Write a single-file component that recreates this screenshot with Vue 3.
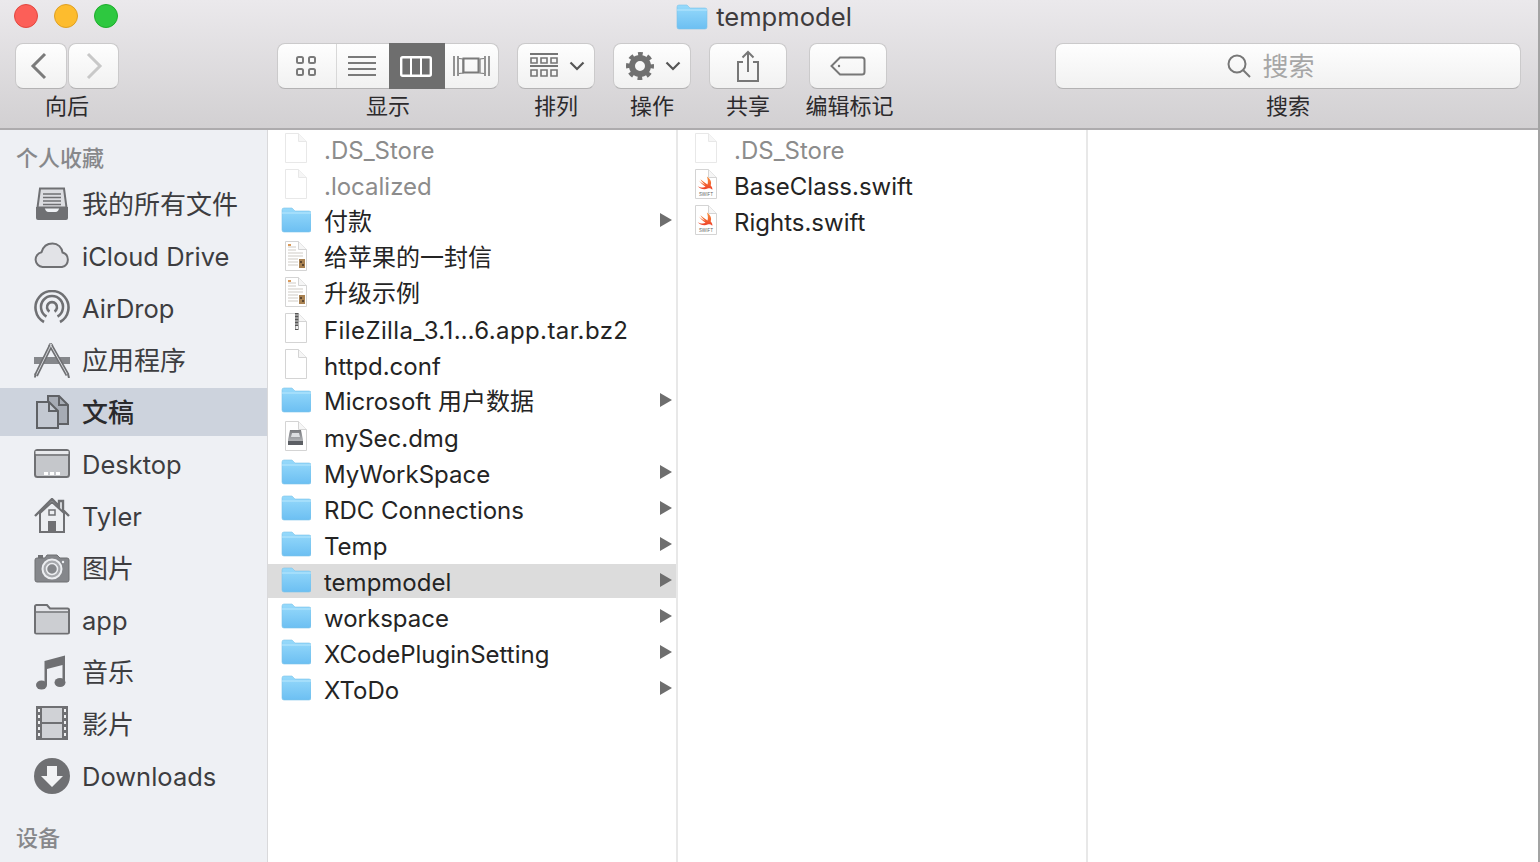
<script setup>
const favorites = [
  { name: '我的所有文件', icon: 'all', cjk: true },
  { name: 'iCloud Drive', icon: 'cloud' },
  { name: 'AirDrop', icon: 'airdrop' },
  { name: '应用程序', icon: 'apps', cjk: true },
  { name: '文稿', icon: 'docs', cjk: true, active: true },
  { name: 'Desktop', icon: 'desktop' },
  { name: 'Tyler', icon: 'home' },
  { name: '图片', icon: 'camera', cjk: true },
  { name: 'app', icon: 'folder' },
  { name: '音乐', icon: 'music', cjk: true },
  { name: '影片', icon: 'film', cjk: true },
  { name: 'Downloads', icon: 'download' }
]

const columns = [
  [
    { name: '.DS_Store', kind: 'blank', hidden: true },
    { name: '.localized', kind: 'blank', hidden: true },
    { name: '付款', kind: 'folder', cjk: true },
    { name: '给苹果的一封信', kind: 'paper', cjk: true },
    { name: '升级示例', kind: 'paper', cjk: true },
    { name: 'FileZilla_3.1…6.app.tar.bz2', kind: 'zip', spaced: true },
    { name: 'httpd.conf', kind: 'blank' },
    { name: 'Microsoft 用户数据', kind: 'folder', cjk: true },
    { name: 'mySec.dmg', kind: 'dmg' },
    { name: 'MyWorkSpace', kind: 'folder' },
    { name: 'RDC Connections', kind: 'folder' },
    { name: 'Temp', kind: 'folder' },
    { name: 'tempmodel', kind: 'folder', active: true },
    { name: 'workspace', kind: 'folder' },
    { name: 'XCodePluginSetting', kind: 'folder' },
    { name: 'XToDo', kind: 'folder' }
  ],
  [
    { name: '.DS_Store', kind: 'blank', hidden: true },
    { name: 'BaseClass.swift', kind: 'swift' },
    { name: 'Rights.swift', kind: 'swift' }
  ]
]
</script>

<template>
  <div class="finder">
    <header class="toolbar">
      <div class="lights">
        <span class="light red"></span>
        <span class="light yellow"></span>
        <span class="light green"></span>
      </div>
      <div class="title">
        <svg width="32" height="26" viewBox="0 0 32 26">
          <defs>
            <linearGradient id="folderFill" x1="0" y1="0" x2="0" y2="1">
              <stop offset="0" stop-color="#97dafb" />
              <stop offset="1" stop-color="#6cbff2" />
            </linearGradient>
            <linearGradient id="swiftFill" x1="0" y1="0" x2="0" y2="1">
              <stop offset="0" stop-color="#f8913a" />
              <stop offset="1" stop-color="#ee3f2a" />
            </linearGradient>
            <linearGradient id="driveFill" x1="0" y1="0" x2="0" y2="1">
              <stop offset="0" stop-color="#77797d" />
              <stop offset="1" stop-color="#c4c6c9" />
            </linearGradient>
          </defs>
          <path d="M1 3a2 2 0 0 1 2-2h8l3 3h15a2 2 0 0 1 2 2v17a2 2 0 0 1-2 2H3a2 2 0 0 1-2-2z" fill="url(#folderFill)" stroke="#7cc3ea" stroke-width=".6" />
          <path d="M1 6h30" stroke="#b9e7fd" stroke-width="1" />
        </svg>
        <span>tempmodel</span>
      </div>
      <div class="tools">
        <div class="group nav-group">
          <div class="buttons">
            <button class="btn nav-btn back">
              <svg width="20" height="30" viewBox="0 0 20 30"><path d="M16 3 4 15l12 12" fill="none" stroke="#7b7b7b" stroke-width="3" /></svg>
            </button>
            <button class="btn nav-btn forward">
              <svg width="20" height="30" viewBox="0 0 20 30"><path d="M4 3l12 12L4 27" fill="none" stroke="#c8c8c8" stroke-width="3" /></svg>
            </button>
          </div>
          <span class="label">向后</span>
        </div>

        <div class="group view-group">
          <div class="segments">
            <button class="seg seg-icons">
              <svg width="22" height="22" viewBox="0 0 22 22" fill="none" stroke="#7a7a7a" stroke-width="2">
                <rect x="2" y="2" width="6" height="6" rx="1.5" /><rect x="14" y="2" width="6" height="6" rx="1.5" />
                <rect x="2" y="14" width="6" height="6" rx="1.5" /><rect x="14" y="14" width="6" height="6" rx="1.5" />
              </svg>
            </button>
            <button class="seg seg-list">
              <svg width="28" height="20" viewBox="0 0 28 20" stroke="#7a7a7a" stroke-width="2"><path d="M0 1h28M0 7h28M0 13h28M0 19h28" /></svg>
            </button>
            <button class="seg seg-columns on">
              <svg width="32" height="21" viewBox="0 0 32 21" fill="none" stroke="#fff" stroke-width="2.4">
                <rect x="1.2" y="1.2" width="29.6" height="18.6" rx="1.5" /><path d="M11 1v19M21 1v19" stroke-width="2" />
              </svg>
            </button>
            <button class="seg seg-flow">
              <svg width="37" height="22" viewBox="0 0 37 22" fill="none" stroke="#7a7a7a" stroke-width="2">
                <rect x="10.5" y="3.5" width="15" height="14" /><path d="M1 1v20M5 1v20M32 1v20M36 1v20" stroke-width="1.6" /><path d="M6 3.500l4 .5v14l-4 .5M31 3.500l-4 .5v14l4 .5" stroke-width="1.2" />
              </svg>
            </button>
          </div>
          <span class="label">显示</span>
        </div>

        <div class="group">
          <button class="btn tool-btn menu-btn">
            <svg width="28" height="26" viewBox="0 0 28 26" fill="none" stroke="#757575">
              <path d="M0 1h28M0 13h28" stroke-width="1.8" />
              <path d="M1 5h6v5H1zM11 5h6v5h-6zM21 5h6v5h-6zM1 17h6v6H1zM11 17h6v6h-6zM21 17h6v6h-6z" stroke-width="1.6" />
            </svg>
            <svg class="chev" width="16" height="10" viewBox="0 0 16 10"><path d="M1.500 1.500 8 8l6.500-6.500" fill="none" stroke="#555" stroke-width="2.2" /></svg>
          </button>
          <span class="label">排列</span>
        </div>

        <div class="group">
          <button class="btn tool-btn menu-btn">
            <svg width="28" height="28" viewBox="0 0 28 28" fill="none" stroke="#707070">
              <circle cx="14" cy="14" r="8" stroke-width="6" />
              <circle cx="14" cy="14" r="11.5" stroke-width="5" stroke-dasharray="4.5 4.531" stroke-dashoffset="2.25" />
            </svg>
            <svg class="chev" width="16" height="10" viewBox="0 0 16 10"><path d="M1.500 1.500 8 8l6.500-6.500" fill="none" stroke="#555" stroke-width="2.2" /></svg>
          </button>
          <span class="label">操作</span>
        </div>

        <div class="group">
          <button class="btn tool-btn">
            <svg width="24" height="32" viewBox="0 0 24 32" fill="none" stroke="#777" stroke-width="2">
              <path d="M7 12H2v19h20V12h-5M12 22V2M6.500 7.500 12 2l5.500 5.500" />
            </svg>
          </button>
          <span class="label">共享</span>
        </div>

        <div class="group tag-group">
          <button class="btn tool-btn tag-btn">
            <svg width="36" height="20" viewBox="0 0 36 20" fill="none" stroke="#777" stroke-width="2">
              <path d="M10 1.500h22a2.500 2.500 0 0 1 2.500 2.500v12a2.500 2.500 0 0 1-2.500 2.500H10L1.500 10z" /><circle cx="9" cy="10" r="1.2" fill="#777" stroke="none" />
            </svg>
          </button>
          <span class="label">编辑标记</span>
        </div>

        <div class="group search-group">
          <div class="btn search">
            <svg width="24" height="24" viewBox="0 0 24 24" fill="none" stroke="#777" stroke-width="2">
              <circle cx="10" cy="10" r="8.5" /><path d="M16 16l7 7" />
            </svg>
            <span>搜索</span>
          </div>
          <span class="label">搜索</span>
        </div>
      </div>
    </header>

    <main class="body">
      <aside class="sidebar">
        <h4 class="side-title">个人收藏</h4>
        <ul class="side-list">
          <li v-for="item in favorites" :key="item.name" class="side-item" :class="{ active: item.active, cjk: item.cjk }">
            <svg class="side-icon" width="36" height="36" viewBox="0 0 36 36">
              <g v-if="item.icon === 'all'">
                <path d="M6 2.500h24l2.500 19h-29z" fill="#dcdde1" stroke="#6f7073" stroke-width="2" />
                <path d="M9 8h18M9 11.500h18M9 15h18M9 18.500h18" stroke="#6f7073" stroke-width="1.5" />
                <path d="M2 21h8.500c.5 3 2 5 4 5h7c2 0 3.500-2 4-5H34v11a2 2 0 0 1-2 2H4a2 2 0 0 1-2-2z" fill="#6f7073" />
              </g>
              <path v-else-if="item.icon === 'cloud'" d="M8.500 29a7.500 7.500 0 0 1-1-14.800C9 9 13 5.500 18.500 5.500c5.500 0 9.500 4 10 9A7.500 7.500 0 0 1 28 29z" fill="#e2e3e7" stroke="#6f7073" stroke-width="2" />
              <g v-else-if="item.icon === 'airdrop'" fill="none" stroke="#6f7073" stroke-width="2.6">
                <path d="M10 32a16.500 16.500 0 1 1 16 0" />
                <path d="M12.500 26.500a11 11 0 1 1 11 0" />
                <path d="M15.500 21.500a5 5 0 1 1 5 0" />
              </g>
              <g v-else-if="item.icon === 'apps'">
                <path d="M0 15h36v7H0z" fill="#85878b" />
                <path d="M17.500 2 2 33.500" stroke="#6f7073" stroke-width="4" />
                <path d="M16 2l17.500 31" stroke="#6f7073" stroke-width="4" />
                <path d="M17.500 2 2 33.500M16 2l17.500 31" stroke="#d4d6da" stroke-width="1" />
                <path d="M1 35.500l.5-4M35 36l-1-4" stroke="#6f7073" stroke-width="2" />
              </g>
              <g v-else-if="item.icon === 'docs'" stroke="#5f6165" stroke-width="2">
                <path d="M14 2h11l9 9v19H14z" fill="#a6abb4" />
                <path d="M25 2v9h9" fill="none" />
                <path d="M3 8h12l9 9v17H3z" fill="#c3c8d1" />
                <path d="M15 8v9h9" fill="none" />
              </g>
              <g v-else-if="item.icon === 'desktop'">
                <rect x="1" y="4" width="34" height="27" rx="2.5" fill="#c5c7cb" stroke="#6f7073" stroke-width="2" />
                <path d="M1 9h34" stroke="#6f7073" stroke-width="1.5" />
                <rect x="1.5" y="5" width="33" height="3" fill="#e8e9ec" />
                <path d="M10 26h4v3h-4zM16 26h4v3h-4zM22 26h4v3h-4z" fill="#fff" />
              </g>
              <g v-else-if="item.icon === 'home'">
                <path d="M6 15v19h24V15L18 4z" fill="#eceef1" stroke="#6f7073" stroke-width="2" />
                <path d="M1 18 18 1l7 7V3h4v9l6 6" fill="none" stroke="#6f7073" stroke-width="2.4" />
                <rect x="15" y="12" width="6" height="5" fill="none" stroke="#6f7073" stroke-width="1.5" />
                <rect x="14" y="23" width="8" height="11" fill="#6f7073" />
              </g>
              <g v-else-if="item.icon === 'camera'">
                <path d="M1 10a2 2 0 0 1 2-2h8l2-3h10l3 3h7a2 2 0 0 1 2 2v20a2 2 0 0 1-2 2H3a2 2 0 0 1-2-2z" fill="#85878b" stroke="#6f7073" />
                <path d="M4 5h5v3H4z" fill="#6f7073" />
                <circle cx="18" cy="19" r="9.5" fill="#a7a9ad" stroke="#eceef1" stroke-width="2" />
                <circle cx="18" cy="19" r="5.5" fill="#85878b" stroke="#eceef1" stroke-width="1.5" />
                <circle cx="29" cy="12" r="1.2" fill="#eceef1" />
              </g>
              <g v-else-if="item.icon === 'folder'">
                <path d="M1 4.500A1.500 1.500 0 0 1 2.500 3H13l3 3.500h17.500A1.500 1.500 0 0 1 35 8v22a1.500 1.500 0 0 1-1.500 1.500h-31A1.500 1.500 0 0 1 1 30z" fill="#e4e5e9" stroke="#6f7073" stroke-width="2" />
                <path d="M2 10.500h32V30.500H2z" fill="#ccced2" />
                <path d="M2 10h32" stroke="#6f7073" stroke-width="1.5" />
              </g>
              <g v-else-if="item.icon === 'music'" fill="#6f7073">
                <ellipse cx="7.500" cy="31" rx="5.500" ry="4.500" />
                <ellipse cx="26" cy="28.500" rx="5.500" ry="4.500" />
                <path d="M10.500 31V7L31 1.500v27h-2.500V11l-15.500 4v16z" />
              </g>
              <g v-else-if="item.icon === 'film'">
                <rect x="2" y="0" width="32" height="34" fill="#6f7073" />
                <rect x="8" y="2" width="20" height="14" fill="#d0d2d6" />
                <rect x="8" y="18" width="20" height="14" fill="#d0d2d6" />
                <path d="M4 3h2v3H4zM4 9h2v3H4zM4 15h2v3H4zM4 21h2v3H4zM4 27h2v3H4zM30 3h2v3h-2zM30 9h2v3h-2zM30 15h2v3h-2zM30 21h2v3h-2zM30 27h2v3h-2z" fill="#f0f1f3" />
              </g>
              <g v-else-if="item.icon === 'download'">
                <circle cx="18" cy="18" r="18" fill="#6f7073" />
                <path d="M13 8h10v10h6L18 29 7 18h6z" fill="#f2f3f5" />
              </g>
            </svg>
            <span class="side-text">{{ item.name }}</span>
          </li>
        </ul>
        <h4 class="side-title devices">设备</h4>
      </aside>

      <section v-for="(col, i) in columns" :key="i" class="column">
        <div v-for="file in col" :key="file.name" class="row" :class="{ selected: file.active, faded: file.hidden }">
          <svg class="file-icon" width="30" height="34" viewBox="0 0 30 34">
            <g v-if="file.kind === 'folder'">
              <path d="M1 5a2 2 0 0 1 2-2h8l3 3h14a2 2 0 0 1 2 2v17a2 2 0 0 1-2 2H3a2 2 0 0 1-2-2z" fill="url(#folderFill)" stroke="#7cc3ea" stroke-width=".6" />
              <path d="M1 8h29" stroke="#b9e7fd" stroke-width="1" />
            </g>
            <g v-else>
              <path d="M4.500.5h13l8 8v21h-21z" fill="#fff" :stroke="file.hidden ? '#e8e8e8' : '#d4d4d4'" stroke-width="1" />
              <path d="M17.500.5v8h8" fill="#f6f6f6" :stroke="file.hidden ? '#e8e8e8' : '#d4d4d4'" stroke-width="1" />
            </g>
            <g v-if="file.kind === 'paper'">
              <path d="M7 6h8M7 9h8M7 12h15M7 15h15M7 18h10M7 21h10M7 24h10" stroke="#cfcbc5" stroke-width="1" />
              <path d="M7 3h3v2H7z" fill="#d99a5b" />
              <path d="M18 18h6v9h-6z" fill="#a98252" />
              <path d="M19 20h2v2h-2zM21 23h2v2h-2z" fill="#5b4630" />
            </g>
            <g v-if="file.kind === 'zip'">
              <path d="M14 0h3.500v17H14z" fill="#555" />
              <path d="M14 2h3.500M14 5h3.500M14 8h3.500M14 11h3.500" stroke="#ddd" stroke-width="1" />
              <path d="M14.500 13h2.500v3h-2.500z" fill="#eee" />
            </g>
            <g v-if="file.kind === 'dmg'">
              <path d="M9 9h11l2 10v5H7v-5z" fill="url(#driveFill)" />
              <path d="M7 20h15v4H7z" fill="#5c5f64" />
              <path d="M11 12h7l1 4h-9z" fill="#dcdee1" />
            </g>
            <g v-if="file.kind === 'swift'">
              <path transform="translate(6 7) scale(.17 .15)" d="M58 4C80 20 88 45 80 62c8 10 12 22 10 30-6-10-18-14-28-8-20 10-44 2-58-18 14 10 32 14 46 6C34 60 20 44 10 30c14 14 30 24 38 30C36 48 26 34 20 22c14 14 32 28 42 34 4-16 2-36-4-52z" fill="url(#swiftFill)" />
              <text x="15" y="27" text-anchor="middle" class="swift-label">SWIFT</text>
            </g>
          </svg>
          <span class="row-name" :class="{ cjk: file.cjk, spaced: file.spaced }">{{ file.name }}</span>
          <i v-if="file.kind === 'folder'" class="arrow"></i>
        </div>
      </section>
    </main>
  </div>
</template>

<style scoped>
.finder {
  height: 862px;
  box-sizing: border-box;
  overflow: hidden;
  display: flex;
  flex-direction: column;
  border-right: 2px solid #a3a3a3;
  font-family: Inter, "Noto Sans CJK SC", sans-serif;
  font-feature-settings: "calt" 0;
  background: #fff;
}

.toolbar {
  position: relative;
  height: 130px;
  box-sizing: border-box;
  border-bottom: 2px solid #adabad;
  background: linear-gradient(#ebe9ec, #d2d0d2);
}

.lights {
  position: absolute;
  left: 14px;
  top: 4px;
  display: flex;
  gap: 16px;
}

.light {
  width: 24px;
  height: 24px;
  border-radius: 50%;
  box-sizing: border-box;
}

.red { background: #fc5f58; border: 1px solid #e2473f; }
.yellow { background: #fdbc2e; border: 1px solid #dfa023; }
.green { background: #2ec840; border: 1px solid #1dad2b; }

.title {
  height: 34px;
  display: flex;
  align-items: center;
  justify-content: center;
  gap: 8px;
  padding: 0 10px 0 0;
  font-size: 25.6px;
  line-height: 32px;
  color: #3e3b3d;
}

.tools {
  display: flex;
  padding: 9px 17px 0 15px;
}

.group {
  display: flex;
  flex-direction: column;
  align-items: center;
  margin-left: 18px;
}

.nav-group {
  margin-left: 0;
}

.view-group {
  margin-left: 158px;
}

.tag-group {
  width: 87px;
  margin-left: 19px;
}

.search-group {
  margin-left: auto;
  width: 466px;
}

.buttons {
  display: flex;
  gap: 1px;
}

.btn {
  height: 46px;
  box-sizing: border-box;
  padding: 0;
  display: flex;
  align-items: center;
  justify-content: center;
  border: 1px solid #cbcacb;
  border-bottom-color: #b3b2b3;
  border-radius: 8px;
  background: linear-gradient(#fefefe, #f1f1f1);
}

.back {
  width: 52px;
  padding-right: 4px;
}

.forward {
  width: 51px;
}

.segments {
  display: flex;
  height: 46px;
  width: 222px;
  box-sizing: border-box;
  border: 1px solid #cbcacb;
  border-bottom-color: #b3b2b3;
  border-radius: 8px;
  background: linear-gradient(#fefefe, #f1f1f1);
}

.seg {
  padding: 0;
  border: 0;
  border-left: 1px solid #d8d8d8;
  background: none;
  display: flex;
  align-items: center;
  justify-content: center;
}

.seg-icons {
  width: 58px;
  padding-right: 2px;
  border-left: 0;
}

.seg-list {
  width: 53px;
  padding-right: 2px;
}

.seg-columns {
  width: 56px;
  padding-right: 2px;
}

.seg-flow {
  width: 53px;
}

.seg.on {
  margin: -1px 0;
  border: 0;
  background: #6e6e6e;
}

.seg.on + .seg {
  border-left: 0;
}

.tool-btn {
  width: 78px;
}

.menu-btn {
  padding-left: 2px;
}

.tag-btn {
  align-self: flex-start;
  margin-left: 3px;
}

.chev {
  margin-left: 11px;
}

.search {
  width: 100%;
  gap: 11px;
  padding-right: 34px;
  font-size: 26px;
  color: #a6a6a6;
}

.search span {
  padding-bottom: 3px;
}

.label {
  margin-top: 2px;
  font-size: 22px;
  line-height: 30px;
  color: #2c2a2c;
  white-space: nowrap;
}

.body {
  flex: 1;
  display: flex;
  min-height: 0;
}

.sidebar {
  width: 268px;
  flex-shrink: 0;
  box-sizing: border-box;
  padding-top: 14px;
  border-right: 1px solid #d9d9db;
  background: #eef0f4;
}

.side-title {
  margin: 0 0 8px 16px;
  font-size: 22px;
  line-height: 28px;
  font-weight: 500;
  color: #87888b;
}

.devices {
  margin-top: 24px;
}

.side-list {
  list-style: none;
  margin: 0;
  padding: 0;
  display: flex;
  flex-direction: column;
  gap: 4px;
}

.side-item {
  height: 48px;
  display: flex;
  align-items: center;
  padding-left: 34px;
  font-size: 25.5px;
  line-height: 46px;
  color: #3d3d40;
}

.side-item.cjk {
  font-size: 26px;
}

.side-item.active {
  background: #cdd3dd;
  color: #2a2a2c;
  font-weight: 500;
}

.side-icon {
  flex-shrink: 0;
}

.side-text {
  margin-left: 12px;
  padding-top: 2px;
  white-space: nowrap;
}

.column {
  width: 410px;
  flex-shrink: 0;
  box-sizing: border-box;
  padding-top: 2px;
  border-right: 2px solid #e8e8e8;
}

.row {
  height: 34px;
  margin-bottom: 2px;
  display: flex;
  align-items: center;
  padding: 0 4px 0 13px;
  font-size: 24px;
  line-height: 32px;
  color: #242424;
}

.row.selected {
  background: #dcdcdc;
}

.row.faded {
  color: #8c8c8c;
}

.file-icon {
  flex-shrink: 0;
  margin-top: 2px;
}

.row-name {
  margin-left: 13px;
  padding-top: 4px;
  white-space: nowrap;
}

.row-name.cjk {
  padding-top: 2px;
}

.row-name.spaced {
  letter-spacing: .4px;
}

.arrow {
  margin-left: auto;
  margin-bottom: 2px;
  border-left: 12px solid #6e6e6e;
  border-top: 7px solid transparent;
  border-bottom: 7px solid transparent;
}

.swift-label {
  font-size: 4.5px;
  fill: #666;
}
</style>
